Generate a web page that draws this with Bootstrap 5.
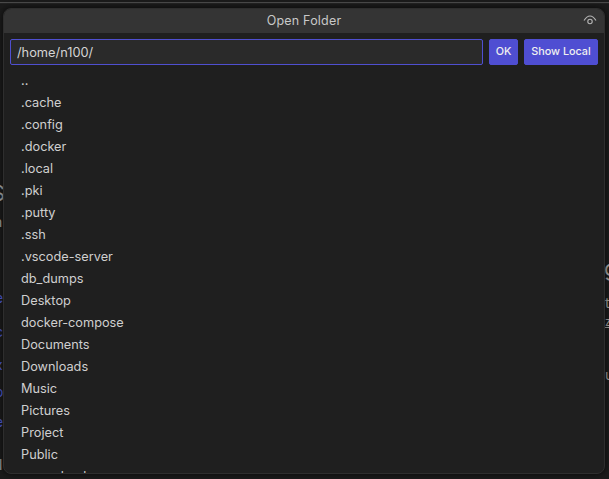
<!DOCTYPE html>
<html lang="en">
<head>
<meta charset="utf-8">
<title>Open Folder</title>
<link href="https://cdn.jsdelivr.net/npm/bootstrap@5.3.0/dist/css/bootstrap.min.css" rel="stylesheet">
<style>
html, body { height: 100%; margin: 0; overflow: hidden; background: #1b1b1b; font-family: Inter, "Liberation Sans", sans-serif; }
.top-rule { height: 2px; margin-top: 2px; background: #4a4a4a; border-bottom: 1px solid #222; }
.peek { position: absolute; line-height: 1; white-space: nowrap; }
.peek-link { color: #4f5bd5; font-size: 14px; left: -5px; }
.peek-head { color: #a8a8a8; font-size: 22px; }
.peek-text { color: #a0a0a0; font-size: 14px; }
.dialog { position: absolute; left: 3px; top: 8px; width: 602px; height: 466px; background: #1f1f1f; border: 1px solid #2e2e2e; border-radius: 8px; overflow: hidden; color: #d0d0d0; box-shadow: 0 0 6px rgba(0,0,0,.7); }
.dialog-bar { height: 24px; background: #343434; color: #c8c8c8; font-size: 12.5px; letter-spacing: .2px; position: relative; }
.eye { position: absolute; right: 7px; top: 6px; width: 14px; height: 11px; }
.path-row { padding: 6px 6px 0 6px; gap: 6px; }
.path-input { height: 26px; padding: 0 6px; font-size: 12.8px; color: #d4d4d4; background: #2a2a2a; border: 1px solid #4f4fd0; border-radius: 2px; box-shadow: none; }
.path-input:focus { color: #d4d4d4; background: #2a2a2a; border-color: #4f4fd0; box-shadow: none; }
.act { height: 26px; padding: 0; font-size: 10.8px; font-weight: 500; line-height: 24px; color: #f0f0f0; background: #4f4ed2; border: 1px solid #4f4ed2; border-radius: 2px; white-space: nowrap; text-align: center; }
.act-ok { width: 29px; }
.act-local { width: 74px; }
.file-list { padding: 5px 0 0 17px; list-style: none; margin: 0; }
.file-list li { height: 22px; line-height: 22px; font-size: 12.75px; color: #cfcfcf; }
</style>
</head>
<body>
<div class="top-rule"></div>
<span class="peek peek-head" style="left:-9px;top:182px">S</span>
<span class="peek peek-text" style="left:-6px;top:215px">n</span>
<span class="peek peek-link" style="top:291px">e</span>
<span class="peek peek-link" style="top:325px">c</span>
<span class="peek peek-link" style="top:358px">x</span>
<span class="peek peek-link" style="top:385px">o</span>
<span class="peek peek-link" style="top:415px">e</span>
<span class="peek peek-text" style="left:-1px;top:458px">l</span>
<span class="peek peek-head" style="left:604px;top:257px">g</span>
<span class="peek peek-text" style="left:605px;top:296px">t</span>
<span class="peek peek-text" style="left:605px;top:317px;font-size:11px;text-decoration:underline">z</span>
<span class="peek peek-text" style="left:605px;top:368px">u</span>
<div class="dialog">
  <div class="dialog-bar d-flex align-items-center justify-content-center">
    <span>Open Folder</span>
    <svg class="eye" viewBox="0 0 14 11" fill="none" stroke="#b5b5b5" stroke-width="1.1" aria-hidden="true"><path d="M1 5.5C3 2.3 5 1 7 1s4 1.3 6 4.5"/><circle cx="7" cy="6.5" r="2.2"/></svg>
  </div>
  <div class="path-row d-flex">
    <input class="form-control path-input flex-grow-1" type="text" value="/home/n100/">
    <button class="btn act act-ok flex-shrink-0" type="button">OK</button>
    <button class="btn act act-local flex-shrink-0" type="button">Show Local</button>
  </div>
  <ul class="file-list">
    <li>..</li><li>.cache</li><li>.config</li><li>.docker</li><li>.local</li><li>.pki</li><li>.putty</li><li>.ssh</li><li>.vscode-server</li><li>db_dumps</li><li>Desktop</li><li>docker-compose</li><li>Documents</li><li>Downloads</li><li>Music</li><li>Pictures</li><li>Project</li><li>Public</li><li>rsync_backups</li>
  </ul>
</div>
<script src="https://cdn.jsdelivr.net/npm/bootstrap@5.3.0/dist/js/bootstrap.bundle.min.js"></script>
</body>
</html>
